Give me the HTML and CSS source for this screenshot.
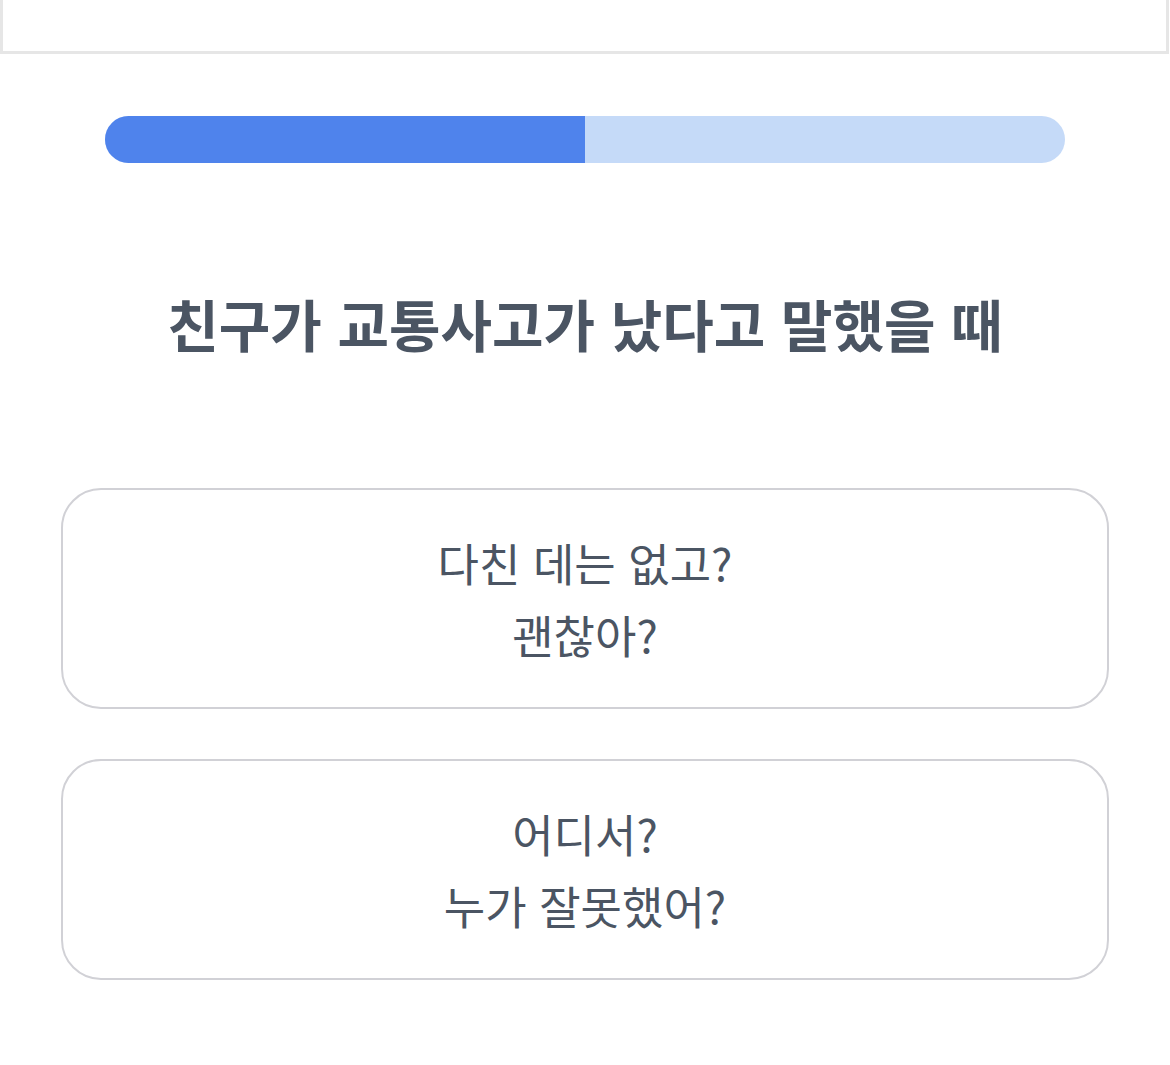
FILE: index.html
```html
<!DOCTYPE html>
<html lang="ko">
<head>
<meta charset="utf-8">
<link rel="stylesheet" href="styles.css">
</head>
<body>
<div class="topbar"></div>
<div class="progress"><div class="fill" style="width:50%"></div></div>
<h1 class="question">친구가 교통사고가 났다고 말했을 때</h1>
<div class="options">
  <button class="option">다친 데는 없고?<br>괜찮아?</button>
  <button class="option">어디서?<br>누가 잘못했어?</button>
</div>
</body>
</html>
```
FILE: styles.css
```css
html, body {
  margin: 0;
  padding: 0;
  background: #ffffff;
}
body {
  font-family: "Noto Sans CJK KR", "Noto Sans", sans-serif;
  color: #4b5563;
}
.topbar {
  box-sizing: border-box;
  height: 54px;
  margin-right: 1px;
  border: 3px solid #e6e6e6;
  border-top: 0;
  background: #fff;
}
.progress {
  margin: 62px 105px 0;
  height: 47px;
  border-radius: 24px;
  background: #c5daf8;
  overflow: hidden;
  display: flex;
}
.fill {
  background: #4f83ec;
  height: 100%;
}
.question {
  margin: 125px 0 0;
  text-align: center;
  font-size: 56px;
  line-height: 70px;
  font-weight: 700;
  color: #4b5563;
}
.options {
  margin: 130px 61px 0;
  display: flex;
  flex-direction: column;
  gap: 50px;
}
.option {
  box-sizing: border-box;
  height: 221px;
  border: 2px solid #d1d1d6;
  border-radius: 40px;
  background: #fff;
  font-family: inherit;
  font-size: 45px;
  line-height: 72px;
  color: #4b5563;
  text-align: center;
  padding: 0;
}
```
